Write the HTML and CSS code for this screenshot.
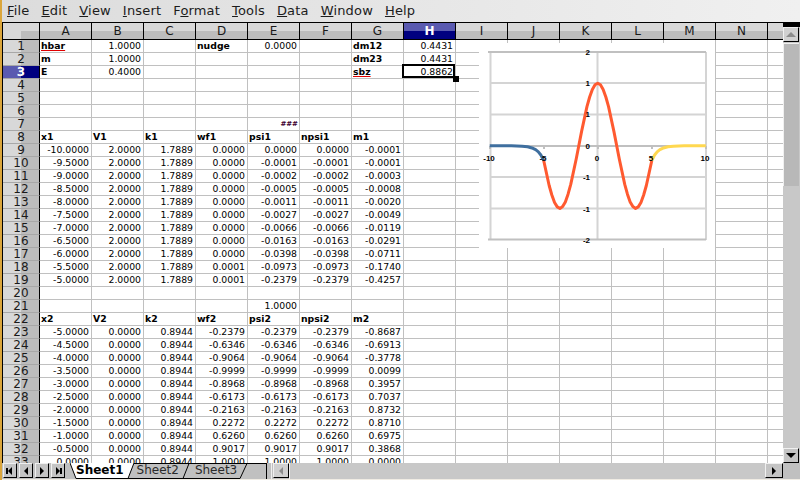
FILE: index.html
```html
<!DOCTYPE html>
<html lang="en">
<head>
  <meta charset="UTF-8">
  <title>Spreadsheet</title>
  <link rel="stylesheet" href="styles.css">
</head>
<body>

<div class="window">
  <div class="menubar">
    <span><u>F</u>ile</span>
    <span><u>E</u>dit</span>
    <span><u>V</u>iew</span>
    <span><u>I</u>nsert</span>
    <span>F<u>o</u>rmat</span>
    <span><u>T</u>ools</span>
    <span><u>D</u>ata</span>
    <span><u>W</u>indow</span>
    <span><u>H</u>elp</span>
  </div>

  <div class="workarea">
    <div class="sheet">
      <table class="grid">
        <thead>
          <tr><th class="corner"></th><th>A</th><th>B</th><th>C</th><th>D</th><th>E</th><th>F</th><th>G</th><th class="selected">H</th><th>I</th><th>J</th><th>K</th><th>L</th><th>M</th><th>N</th><th></th></tr>
        </thead>
        <tbody>
          <tr><th>1</th><td class="label"><span class="misspelt">hbar</span></td><td>1.0000</td><td></td><td class="label">nudge</td><td>0.0000</td><td></td><td class="label">dm12</td><td>0.4431</td><td></td><td></td><td></td><td></td><td></td><td></td><td></td></tr>
          <tr><th>2</th><td class="label">m</td><td>1.0000</td><td></td><td></td><td></td><td></td><td class="label">dm23</td><td>0.4431</td><td></td><td></td><td></td><td></td><td></td><td></td><td></td></tr>
          <tr><th class="selected">3</th><td class="label">E</td><td>0.4000</td><td></td><td></td><td></td><td></td><td class="label"><span class="misspelt">sbz</span></td><td class="current">0.8862</td><td></td><td></td><td></td><td></td><td></td><td></td><td></td></tr>
          <tr><th>4</th><td></td><td></td><td></td><td></td><td></td><td></td><td></td><td></td><td></td><td></td><td></td><td></td><td></td><td></td><td></td></tr>
          <tr><th>5</th><td></td><td></td><td></td><td></td><td></td><td></td><td></td><td></td><td></td><td></td><td></td><td></td><td></td><td></td><td></td></tr>
          <tr><th>6</th><td></td><td></td><td></td><td></td><td></td><td></td><td></td><td></td><td></td><td></td><td></td><td></td><td></td><td></td><td></td></tr>
          <tr><th>7</th><td></td><td></td><td></td><td></td><td class="overflow">###</td><td></td><td></td><td></td><td></td><td></td><td></td><td></td><td></td><td></td><td></td></tr>
          <tr><th>8</th><td class="label">x1</td><td class="label">V1</td><td class="label">k1</td><td class="label">wf1</td><td class="label">psi1</td><td class="label">npsi1</td><td class="label">m1</td><td></td><td></td><td></td><td></td><td></td><td></td><td></td><td></td></tr>
          <tr><th>9</th><td>-10.0000</td><td>2.0000</td><td>1.7889</td><td>0.0000</td><td>0.0000</td><td>0.0000</td><td>-0.0001</td><td></td><td></td><td></td><td></td><td></td><td></td><td></td><td></td></tr>
          <tr><th>10</th><td>-9.5000</td><td>2.0000</td><td>1.7889</td><td>0.0000</td><td>-0.0001</td><td>-0.0001</td><td>-0.0001</td><td></td><td></td><td></td><td></td><td></td><td></td><td></td><td></td></tr>
          <tr><th>11</th><td>-9.0000</td><td>2.0000</td><td>1.7889</td><td>0.0000</td><td>-0.0002</td><td>-0.0002</td><td>-0.0003</td><td></td><td></td><td></td><td></td><td></td><td></td><td></td><td></td></tr>
          <tr><th>12</th><td>-8.5000</td><td>2.0000</td><td>1.7889</td><td>0.0000</td><td>-0.0005</td><td>-0.0005</td><td>-0.0008</td><td></td><td></td><td></td><td></td><td></td><td></td><td></td><td></td></tr>
          <tr><th>13</th><td>-8.0000</td><td>2.0000</td><td>1.7889</td><td>0.0000</td><td>-0.0011</td><td>-0.0011</td><td>-0.0020</td><td></td><td></td><td></td><td></td><td></td><td></td><td></td><td></td></tr>
          <tr><th>14</th><td>-7.5000</td><td>2.0000</td><td>1.7889</td><td>0.0000</td><td>-0.0027</td><td>-0.0027</td><td>-0.0049</td><td></td><td></td><td></td><td></td><td></td><td></td><td></td><td></td></tr>
          <tr><th>15</th><td>-7.0000</td><td>2.0000</td><td>1.7889</td><td>0.0000</td><td>-0.0066</td><td>-0.0066</td><td>-0.0119</td><td></td><td></td><td></td><td></td><td></td><td></td><td></td><td></td></tr>
          <tr><th>16</th><td>-6.5000</td><td>2.0000</td><td>1.7889</td><td>0.0000</td><td>-0.0163</td><td>-0.0163</td><td>-0.0291</td><td></td><td></td><td></td><td></td><td></td><td></td><td></td><td></td></tr>
          <tr><th>17</th><td>-6.0000</td><td>2.0000</td><td>1.7889</td><td>0.0000</td><td>-0.0398</td><td>-0.0398</td><td>-0.0711</td><td></td><td></td><td></td><td></td><td></td><td></td><td></td><td></td></tr>
          <tr><th>18</th><td>-5.5000</td><td>2.0000</td><td>1.7889</td><td>0.0001</td><td>-0.0973</td><td>-0.0973</td><td>-0.1740</td><td></td><td></td><td></td><td></td><td></td><td></td><td></td><td></td></tr>
          <tr><th>19</th><td>-5.0000</td><td>2.0000</td><td>1.7889</td><td>0.0001</td><td>-0.2379</td><td>-0.2379</td><td>-0.4257</td><td></td><td></td><td></td><td></td><td></td><td></td><td></td><td></td></tr>
          <tr><th>20</th><td></td><td></td><td></td><td></td><td></td><td></td><td></td><td></td><td></td><td></td><td></td><td></td><td></td><td></td><td></td></tr>
          <tr><th>21</th><td></td><td></td><td></td><td></td><td>1.0000</td><td></td><td></td><td></td><td></td><td></td><td></td><td></td><td></td><td></td><td></td></tr>
          <tr><th>22</th><td class="label">x2</td><td class="label">V2</td><td class="label">k2</td><td class="label">wf2</td><td class="label">psi2</td><td class="label">npsi2</td><td class="label">m2</td><td></td><td></td><td></td><td></td><td></td><td></td><td></td><td></td></tr>
          <tr><th>23</th><td>-5.0000</td><td>0.0000</td><td>0.8944</td><td>-0.2379</td><td>-0.2379</td><td>-0.2379</td><td>-0.8687</td><td></td><td></td><td></td><td></td><td></td><td></td><td></td><td></td></tr>
          <tr><th>24</th><td>-4.5000</td><td>0.0000</td><td>0.8944</td><td>-0.6346</td><td>-0.6346</td><td>-0.6346</td><td>-0.6913</td><td></td><td></td><td></td><td></td><td></td><td></td><td></td><td></td></tr>
          <tr><th>25</th><td>-4.0000</td><td>0.0000</td><td>0.8944</td><td>-0.9064</td><td>-0.9064</td><td>-0.9064</td><td>-0.3778</td><td></td><td></td><td></td><td></td><td></td><td></td><td></td><td></td></tr>
          <tr><th>26</th><td>-3.5000</td><td>0.0000</td><td>0.8944</td><td>-0.9999</td><td>-0.9999</td><td>-0.9999</td><td>0.0099</td><td></td><td></td><td></td><td></td><td></td><td></td><td></td><td></td></tr>
          <tr><th>27</th><td>-3.0000</td><td>0.0000</td><td>0.8944</td><td>-0.8968</td><td>-0.8968</td><td>-0.8968</td><td>0.3957</td><td></td><td></td><td></td><td></td><td></td><td></td><td></td><td></td></tr>
          <tr><th>28</th><td>-2.5000</td><td>0.0000</td><td>0.8944</td><td>-0.6173</td><td>-0.6173</td><td>-0.6173</td><td>0.7037</td><td></td><td></td><td></td><td></td><td></td><td></td><td></td><td></td></tr>
          <tr><th>29</th><td>-2.0000</td><td>0.0000</td><td>0.8944</td><td>-0.2163</td><td>-0.2163</td><td>-0.2163</td><td>0.8732</td><td></td><td></td><td></td><td></td><td></td><td></td><td></td><td></td></tr>
          <tr><th>30</th><td>-1.5000</td><td>0.0000</td><td>0.8944</td><td>0.2272</td><td>0.2272</td><td>0.2272</td><td>0.8710</td><td></td><td></td><td></td><td></td><td></td><td></td><td></td><td></td></tr>
          <tr><th>31</th><td>-1.0000</td><td>0.0000</td><td>0.8944</td><td>0.6260</td><td>0.6260</td><td>0.6260</td><td>0.6975</td><td></td><td></td><td></td><td></td><td></td><td></td><td></td><td></td></tr>
          <tr><th>32</th><td>-0.5000</td><td>0.0000</td><td>0.8944</td><td>0.9017</td><td>0.9017</td><td>0.9017</td><td>0.3868</td><td></td><td></td><td></td><td></td><td></td><td></td><td></td><td></td></tr>
          <tr><th>33</th><td>0.0000</td><td>0.0000</td><td>0.8944</td><td>1.0000</td><td>1.0000</td><td>1.0000</td><td>0.0000</td><td></td><td></td><td></td><td></td><td></td><td></td><td></td><td></td></tr>
        </tbody>
      </table>

      <!-- chart floats over the cells; viewBox uses window pixels so the numbers read like the screen -->
      <svg class="chart" viewBox="479 43 236 205" width="236" height="205">
        <g class="gridlines">
          <path d="M490 83H706M490 114.5H706M490 177H706M490 208.5H706"/>
          <path d="M490.5 52V240M597.5 52V240M706 52V240"/>
        </g>
        <g class="axis">
          <path d="M488 52H706M488 239.5H706M490 146H706"/>
          <path d="M490 146V149M544 146V149M598 146V149M652 146V149M706 146V149"/>
        </g>
        <polyline class="line-left" points="489.75,145.8 511.35,145.87 516.75,145.97 522.15,146.2 527.55,146.8 532.95,148.3 535.65,149.7 538.35,151.9 541.05,155.3 543.75,160.7"/>
        <polyline class="line-mid" points="543.75,160.7 549.15,185.5 551.85,195 554.55,202.5 557.25,206.9 559.95,208.4 562.65,206.6 565.35,201.9 568.05,194.2 570.75,184.4 576.15,159.3 581.55,131.6 586.95,106.6 589.65,97 592.35,89.4 595.05,84.8 597.75,83.2 600.45,84.8 603.15,89.4 605.85,97 608.55,106.6 613.95,131.6 619.35,159.3 624.75,184.4 627.45,194.2 630.15,201.9 632.85,206.6 635.55,208.4 638.25,206.9 640.95,202.5 643.65,195 646.35,185.5 651.75,160.7"/>
        <polyline class="line-right" points="651.75,160.7 654.45,155.3 657.15,151.9 659.85,149.7 662.55,148.3 667.95,146.8 673.35,146.2 678.75,145.97 684.15,145.87 705.75,145.8"/>
        <g class="ticks-y">
          <text x="489" y="161">-10</text>
          <text x="543" y="161">-5</text>
          <text x="597" y="161">0</text>
          <text x="651" y="161">5</text>
          <text x="705" y="161">10</text>
        </g>
        <g class="ticks-x">
          <text x="590" y="55">2</text>
          <text x="590" y="86">1</text>
          <text x="590" y="117">1</text>
          <text x="590" y="149">0</text>
          <text x="590" y="180">-1</text>
          <text x="590" y="212">-1</text>
          <text x="590" y="243">-2</text>
        </g>
      </svg>
    </div>

    <div class="vscroll">
      <div class="vscroll-cap"></div>
      <div class="btn btn-up"><i class="arrow-up"></i></div>
      <div class="thumb"></div>
      <div class="btn btn-down"><i class="arrow-down"></i></div>
    </div>
  </div>

  <div class="statusrow">
    <div class="tabnav">
      <div class="btn"><i class="first"></i></div>
      <div class="btn"><i class="prev"></i></div>
      <div class="btn"><i class="next"></i></div>
      <div class="btn"><i class="last"></i></div>
    </div>
    <div class="tabs">
      <svg class="tab-shapes" viewBox="0 0 196 16" width="196" height="16">
        <path class="tab-back" d="M64 .5H196M58 15.5H113L119 .5M113 15.5H170L177 .5"/>
        <path class="tab-front" d="M0 0L6 15.5H58L64 0"/>
      </svg>
      <span class="tab active">Sheet1</span>
      <span class="tab">Sheet2</span>
      <span class="tab">Sheet3</span>
    </div>
    <div class="hscroll">
      <div class="sash"></div>
      <div class="btn btn-left"><i class="prev dim"></i></div>
      <div class="hthumb"></div>
      <div class="btn btn-right"><i class="next"></i></div>
    </div>
    <div class="scroll-corner"></div>
  </div>
</div>

</body>
</html>
```
FILE: styles.css
```css
html, body {
  margin: 0;
  padding: 0;
}
body {
  width: 800px;
  height: 480px;
  overflow: hidden;
  background: #f0ece4;
}
.window {
  width: 800px;
  height: 480px;
  box-sizing: border-box;
  border-left: 2px solid #dba63c;
  display: flex;
  flex-direction: column;
  font-family: "DejaVu Sans", sans-serif;
}

.menubar {
  height: 22px;
  flex: none;
  box-sizing: border-box;
  padding: 3px 0 0 5px;
  display: flex;
  gap: 12px;
  font-size: 13px;
  letter-spacing: .17px;
  line-height: 15px;
  color: #1c1c1c;
  background: linear-gradient(to right, #dcdcdc, #f0f0f0);
}

.workarea {
  height: 440px;
  flex: none;
  display: flex;
  border-top: 1px solid #000;
}
.sheet {
  position: relative;
  flex: 1;
  overflow: hidden;
  border-left: 1px solid #000;
  background: #fff;
}

.grid {
  border-collapse: separate;
  border-spacing: 0;
  table-layout: fixed;
  width: 817px;
  font-size: 9.3px;
  color: #000;
}
.grid td {
  width: 52px;
  height: 13px;
  box-sizing: border-box;
  padding: 0 2px 0 1px;
  border-right: 1px solid #c0c0c0;
  border-bottom: 1px solid #c0c0c0;
  text-align: right;
  line-height: 12px;
  white-space: nowrap;
  overflow: hidden;
}
.grid td.label {
  text-align: left;
  font-weight: bold;
}
.misspelt {
  text-decoration: underline #e00000;
  text-underline-offset: 1px;
}
.grid td.overflow {
  padding-right: 1px;
  color: #400030;
  font-weight: bold;
  font-size: 7px;
}
.grid td.current {
  position: relative;
  overflow: visible;
}
.grid td.current::before {
  content: "";
  position: absolute;
  inset: -2px 0 0 -2px;
  border: 2px solid #000;
}
.grid td.current::after {
  content: "";
  position: absolute;
  right: -4px;
  bottom: -4px;
  width: 6px;
  height: 6px;
  background: #000;
}

.grid th {
  font-weight: normal;
  font-size: 12px;
  color: #1a1a1a;
  padding: 0;
  box-sizing: border-box;
}
.grid thead th {
  width: 52px;
  height: 17px;
  line-height: 15px;
  border-right: 1px solid #000;
  border-bottom: 1px solid #000;
  background: linear-gradient(to bottom, #d8d8d8 50%, #bdbdbd 50%);
}
.grid thead th.corner {
  width: 37px;
  background: linear-gradient(to bottom, transparent 50%, #bdbdbd 50%) 18px 0 no-repeat, #d8d8d8;
}
.grid thead th.selected {
  color: #fff;
  font-weight: bold;
  background: linear-gradient(to bottom, #5a5ab0 50%, #000080 50%);
}
.grid tbody th {
  width: 37px;
  height: 13px;
  line-height: 12px;
  border-right: 1px solid #000;
  border-bottom: 1px solid #a8a8a8;
  background: linear-gradient(to right, #d8d8d8 50%, #bdbdbd 50%);
  overflow: hidden;
}
.grid tbody th.selected {
  color: #fff;
  font-weight: bold;
  background: linear-gradient(to right, #5a5ab0 50%, #000080 50%);
}

.chart {
  position: absolute;
  left: 476px;
  top: 20px;
  background: #fff;
}
.gridlines path {
  fill: none;
  stroke: #d4d4d4;
  stroke-width: 2;
}
.axis path {
  fill: none;
  stroke: #c0c0c0;
  stroke-width: 2;
}
.chart polyline {
  fill: none;
  stroke-width: 3;
  stroke-linejoin: round;
}
.line-left { stroke: #3f6f9f; }
.line-mid { stroke: #ff5a30; }
.line-right { stroke: #ffd850; }
.chart text {
  font-family: "Liberation Sans", sans-serif;
  font-size: 8px;
  font-weight: bold;
  fill: #000;
}
.ticks-y text { text-anchor: middle; }
.ticks-x text { text-anchor: end; }

.vscroll {
  position: relative;
  width: 17px;
  flex: none;
  background: #c8c8c8;
}
.vscroll-cap {
  height: 4px;
  background: #000;
}
.btn {
  box-sizing: border-box;
  width: 14px;
  height: 15px;
  flex: none;
  display: flex;
  align-items: center;
  justify-content: center;
  background: #c4c4c4;
  border: 1px solid;
  border-color: #f0f0f0 #000 #000 #f0f0f0;
}
.vscroll .btn-up {
  width: 16px;
  margin-bottom: 1px;
  background: #d0d0d0;
}
.vscroll .thumb {
  width: 16px;
  height: 143px;
  box-sizing: border-box;
  background: #b8b8b8;
  border-top: 1px solid #f0f0f0;
  border-left: 1px solid #f0f0f0;
}
.vscroll .btn-down {
  position: absolute;
  left: 0;
  bottom: 0;
  width: 16px;
}

.arrow-up, .arrow-down {
  width: 0;
  height: 0;
  border-left: 5px solid transparent;
  border-right: 5px solid transparent;
}
.arrow-up { border-bottom: 5px solid #8c8c8c; }
.arrow-down { border-top: 5px solid #000; }
.first, .last, .prev, .next {
  width: 0;
  height: 0;
  border-top: 4px solid transparent;
  border-bottom: 4px solid transparent;
}
.prev, .first { border-right: 4px solid #000; }
.next, .last { border-left: 4px solid #000; }
.first { box-shadow: -3px 0 0 -1px #000; }
.last { box-shadow: 3px 0 0 -1px #000; }
.prev.dim { border-right-color: #8c8c8c; }

.statusrow {
  height: 16px;
  flex: none;
  display: flex;
  background: #c0c0c0;
  font-size: 12px;
}
.tabnav {
  display: flex;
  gap: 2px;
  padding-left: 1px;
  width: 66px;
  flex: none;
  box-sizing: border-box;
}
.tabs {
  position: relative;
  width: 198px;
  flex: none;
  display: flex;
  line-height: 15px;
  color: #2a2a2a;
}
.tab-shapes {
  position: absolute;
  left: 2px;
  top: 0;
}
.tab-front {
  fill: #fff;
  stroke: #000;
}
.tab-back {
  fill: none;
  stroke: #000;
}
.tab {
  position: relative;
  margin-left: 16px;
}
.tab.active {
  margin-left: 8px;
  font-weight: bold;
  color: #000;
}
.tab.active + .tab {
  margin-left: 13px;
}
.hscroll {
  flex: 1;
  display: flex;
}
.sash {
  width: 6px;
  flex: none;
  box-sizing: border-box;
  border-left: 1px solid #000;
  border-right: 1px solid #f0f0f0;
  margin-right: 1px;
}
.hscroll .btn-left {
  width: 16px;
  background: #d0d0d0;
}
.hthumb {
  flex: 1;
  background: #c8c8c8;
  border-left: 1px solid #f0f0f0;
}
.hscroll .btn-right {
  width: 18px;
}
.scroll-corner {
  width: 17px;
  flex: none;
  background: #c0c0c0;
}
```
